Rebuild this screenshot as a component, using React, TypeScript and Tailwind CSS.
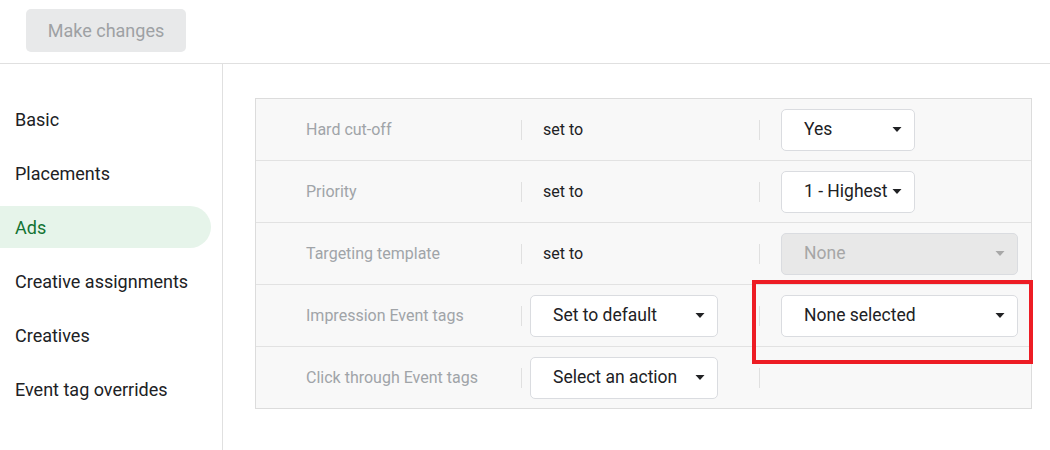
import React from "react";

const font = { fontFamily: "Roboto, 'Liberation Sans', Arial, sans-serif" };

function Caret({ disabled }: { disabled?: boolean }) {
  return (
    <svg width="10" height="5" viewBox="0 0 10 5" className="shrink-0">
      <polygon points="0.5,0 9.5,0 5,5" fill={disabled ? "#a8a8a8" : "#202124"} />
    </svg>
  );
}

function Select({
  label,
  width,
  disabled,
}: {
  label: string;
  width: string;
  disabled?: boolean;
}) {
  return (
    <div
      className={`${width} h-[42px] flex items-center justify-between pl-[22px] pr-[12px] rounded-[5px] border border-[#dadce0] text-[17.5px] ${
        disabled ? "bg-[#e8e8e8] text-[#a6a6a6]" : "bg-white text-[#202124]"
      }`}
    >
      <span className="whitespace-nowrap">{label}</span>
      <Caret disabled={disabled} />
    </div>
  );
}

function Divider() {
  return <div className="w-px h-5 bg-[#e0e0e0] shrink-0" />;
}

type Row = {
  label: string;
  middle: React.ReactNode;
  right?: React.ReactNode;
};

const rows: Row[] = [
  { label: "Hard cut-off", middle: "set to", right: <Select label="Yes" width="w-[134px]" /> },
  { label: "Priority", middle: "set to", right: <Select label="1 - Highest" width="w-[134px]" /> },
  {
    label: "Targeting template",
    middle: "set to",
    right: <Select label="None" width="w-[237px]" disabled />,
  },
  {
    label: "Impression Event tags",
    middle: <Select label="Set to default" width="w-[188px]" />,
    right: <Select label="None selected" width="w-[237px]" />,
  },
  {
    label: "Click through Event tags",
    middle: <Select label="Select an action" width="w-[188px]" />,
  },
];

const nav = ["Basic", "Placements", "Ads", "Creative assignments", "Creatives", "Event tag overrides"];

export default function App() {
  return (
    <div className="w-[1050px] h-[450px] bg-white overflow-hidden flex flex-col" style={font}>
      {/* Top bar */}
      <div className="h-[64px] border-b border-[#e0e0e0] shrink-0 pl-[26px] pt-[9px]">
        <button className="w-[160px] h-[43px] rounded-[5px] bg-[#e8e9ea] text-[#9ea1a4] text-[18px]">
          Make changes
        </button>
      </div>

      <div className="flex flex-1">
        {/* Sidebar */}
        <div className="w-[223px] border-r border-[#e0e0e0] pt-[34px] pr-[11px] flex flex-col gap-[12.2px] shrink-0">
          {nav.map((n) => (
            <div
              key={n}
              className={`h-[42px] flex items-center pl-[15px] text-[18px] rounded-r-full ${
                n === "Ads" ? "bg-[#e6f4ea] text-[#137333]" : "text-[#202124]"
              }`}
            >
              {n}
            </div>
          ))}
        </div>

        {/* Main */}
        <div className="pl-[32px] pt-[34px]">
          <div className="relative w-[777px] border border-[#dcdcdc] bg-[#f8f8f8]">
            {rows.map((r, i) => (
              <div
                key={r.label}
                className={`flex items-center ${i === 0 ? "h-[61px]" : "h-[62px] border-t border-[#e2e2e2]"}`}
              >
                <div className="w-[265px] pl-[50px] text-[16px] text-[#a0a4a8] whitespace-nowrap">{r.label}</div>
                <div className="w-[238px] flex items-center">
                  <Divider />
                  {typeof r.middle === "string" ? (
                    <span className="ml-[21px] text-[16px] text-[#202124]">{r.middle}</span>
                  ) : (
                    <div className="ml-[8px]">{r.middle}</div>
                  )}
                </div>
                <div className="flex items-center">
                  <Divider />
                  {r.right && <div className="ml-[21px]">{r.right}</div>}
                </div>
              </div>
            ))}
            {/* annotation */}
            <div className="absolute left-[496px] top-[181px] w-[281px] h-[84px] border-[4px] border-[#ed1c24] pointer-events-none" />
          </div>
        </div>
      </div>
    </div>
  );
}
